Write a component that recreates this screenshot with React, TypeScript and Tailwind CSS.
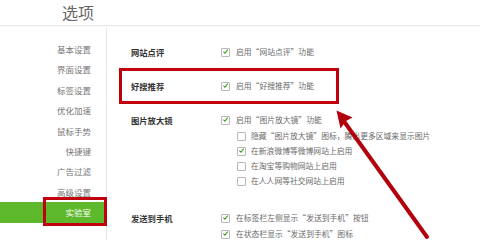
import type { ReactNode } from 'react'

const CJK = '"Noto Sans CJK SC", "Noto Sans", sans-serif'

const menu = ['基本设置', '界面设置', '标签设置', '优化加速', '鼠标手势', '快捷键', '广告过滤', '高级设置', '实验室']

function Check({ on }: { on?: boolean }) {
  return (
    <span className="w-[9px] h-[9px] shrink-0 border border-[#b8b8b8] bg-white rounded-[1px] flex items-center justify-center">
      {on && (
        <svg width="9" height="9" viewBox="0 0 9 9" className="-mt-px">
          <path d="M1.8 4.6 L3.8 6.6 L7.4 2.2" fill="none" stroke="#3f9e1e" strokeWidth="1.4" />
        </svg>
      )}
    </span>
  )
}

function Option({ on, children, sub }: { on?: boolean; children: ReactNode; sub?: boolean }) {
  return (
    <div className={`h-[15px] flex items-center ${sub ? 'pl-[16px] gap-[5px]' : 'gap-[6px]'}`}>
      <Check on={on} />
      <span className="text-[7.8px] text-[#6a6a6a] whitespace-nowrap leading-none">{children}</span>
    </div>
  )
}

function Row({ label, children, className = '' }: { label: string; children: ReactNode; className?: string }) {
  return (
    <div className={`flex ${className}`}>
      <div className="w-[90px] h-[15px] flex items-center text-[8.3px] font-bold text-[#333] leading-none">{label}</div>
      <div className="flex flex-col">{children}</div>
    </div>
  )
}

export default function App() {
  return (
    <div className="relative w-[480px] h-[240px] bg-white overflow-hidden" style={{ fontFamily: CJK }}>
      {/* header */}
      <div className="h-[26px] border-b border-[#e6e6e6] pl-[62px] flex items-center">
        <span className="text-[16px] text-[#666] leading-none -mt-[2px]">选项</span>
      </div>

      <div className="flex">
        {/* sidebar */}
        <div className="w-[107px] h-[214px] border-r border-[#e8e8e8] pt-[11px] mt-[2px] flex flex-col">
          {menu.map((m, i) =>
            i === menu.length - 1 ? (
              <div key={m} className="relative h-[20.4px] bg-[#5db82b] flex items-center justify-end pr-[15px]">
                <span className="text-[8.5px] text-white leading-none">{m}</span>
                <div className="absolute left-[43px] -top-[5px] w-[64px] h-[29px] border-[3px] border-[#c0000c]" />
              </div>
            ) : (
              <div key={m} className="h-[20.4px] flex items-center justify-end pr-[15px]">
                <span className="text-[8.5px] text-[#777] leading-none">{m}</span>
              </div>
            )
          )}
        </div>

        {/* content */}
        <div className="flex flex-col pt-[18.5px]">
          <Row label="网站点评" className="pl-[24px]">
            <Option on>启用“网站点评”功能</Option>
          </Row>

          <div className="ml-[12px] mt-[8.5px] w-[220px] h-[36px] border-[3px] border-[#c0000c] pl-[9px] pt-[7.5px]">
            <Row label="好搜推荐">
              <Option on>启用“好搜推荐”功能</Option>
            </Row>
          </div>

          <Row label="图片放大镜" className="pl-[24px] mt-[8.5px]">
            <div className="h-[16px] flex flex-col justify-start">
              <Option on>启用“图片放大镜”功能</Option>
            </div>
            <Option sub>隐藏“图片放大镜”图标，腾出更多区域来显示图片</Option>
            <Option sub on>在新浪微博等微博网站上启用</Option>
            <Option sub>在淘宝等购物网站上启用</Option>
            <Option sub>在人人网等社交网站上启用</Option>
          </Row>

          <Row label="发送到手机" className="pl-[24px] mt-[22px]">
            <div className="h-[16px]">
              <Option on>在标签栏左侧显示“发送到手机”按钮</Option>
            </div>
            <Option on>在状态栏显示“发送到手机”图标</Option>
          </Row>
        </div>
      </div>

      {/* annotation arrow */}
      <svg className="absolute inset-0 pointer-events-none" width="480" height="240" viewBox="0 0 480 240">
        <line x1="427" y1="237" x2="343" y2="120" stroke="#b2000c" strokeWidth="4" strokeLinecap="round" />
        <path d="M336.5 110.5 L352.5 117.5 L346 121 L340.5 128.5 Z" fill="#b2000c" />
      </svg>
    </div>
  )
}
